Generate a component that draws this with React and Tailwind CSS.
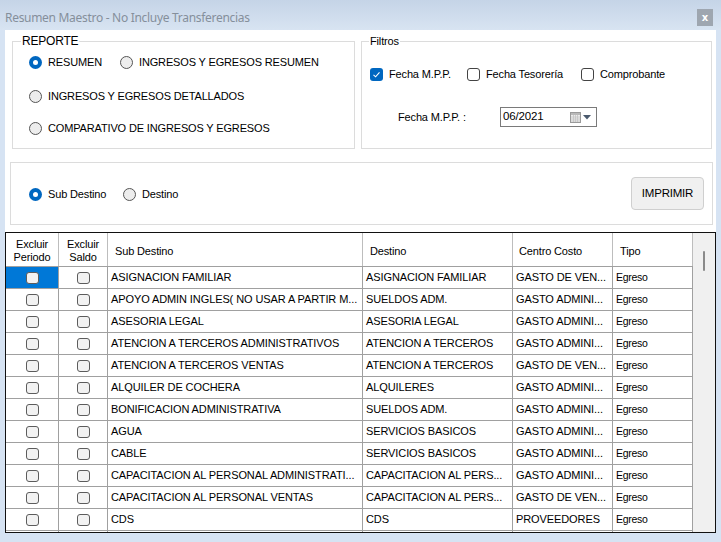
import React from "react";

const rows = [
  ["ASIGNACION FAMILIAR", "ASIGNACION FAMILIAR", "GASTO DE VEN..."],
  ["APOYO ADMIN INGLES( NO USAR A PARTIR M...", "SUELDOS ADM.", "GASTO ADMINI..."],
  ["ASESORIA LEGAL", "ASESORIA LEGAL", "GASTO ADMINI..."],
  ["ATENCION A TERCEROS ADMINISTRATIVOS", "ATENCION A TERCEROS", "GASTO ADMINI..."],
  ["ATENCION A TERCEROS VENTAS", "ATENCION A TERCEROS", "GASTO DE VEN..."],
  ["ALQUILER DE COCHERA", "ALQUILERES", "GASTO ADMINI..."],
  ["BONIFICACION ADMINISTRATIVA", "SUELDOS ADM.", "GASTO ADMINI..."],
  ["AGUA", "SERVICIOS BASICOS", "GASTO ADMINI..."],
  ["CABLE", "SERVICIOS BASICOS", "GASTO ADMINI..."],
  ["CAPACITACION AL PERSONAL ADMINISTRATI...", "CAPACITACION AL PERS...", "GASTO ADMINI..."],
  ["CAPACITACION AL PERSONAL VENTAS", "CAPACITACION AL PERS...", "GASTO DE VEN..."],
  ["CDS", "CDS", "PROVEEDORES"],
  ["", "", ""],
];

function Radio({ checked }) {
  return checked ? (
    <span className="w-[13px] h-[13px] rounded-full bg-[#0067c0] flex items-center justify-center shrink-0">
      <span className="w-[5px] h-[5px] rounded-full bg-white" />
    </span>
  ) : (
    <span className="w-[13px] h-[13px] rounded-full border border-[#555] bg-[#ededed] shrink-0" />
  );
}

function Check({ checked }) {
  return checked ? (
    <span className="w-[13px] h-[13px] rounded-[3px] bg-[#0067c0] flex items-center justify-center shrink-0">
      <svg width="9" height="9" viewBox="0 0 9 9">
        <path d="M1.5 4.8 L3.6 6.8 L7.5 2.4" fill="none" stroke="white" strokeWidth="1.1" />
      </svg>
    </span>
  ) : (
    <span className="w-[13px] h-[13px] rounded-[3px] border border-[#444] bg-white shrink-0" />
  );
}

function GridCheck() {
  return <span className="w-[13px] h-[12px] rounded-[3px] border border-[#5c5c5c] bg-[#f2f2f2] block" />;
}

export default function App() {
  return (
    <div className="w-[721px] h-[542px] bg-[#d6e3f3] flex flex-col overflow-hidden font-['Liberation_Sans',Arial,sans-serif] text-[11px] text-black tracking-[-0.15px]">
      {/* Title bar */}
      <div className="h-[30px] shrink-0 flex items-center justify-between pl-[5px] pr-[8px] bg-gradient-to-b from-[#c5d4e7] to-[#d8e4f2]">
        <span className="font-['Noto_Sans',sans-serif] text-[12px] tracking-[-0.3px] text-[#858f9b] pt-[5px]">
          Resumen Maestro - No Incluye Transferencias
        </span>
        <span className="w-[16px] h-[17px] mt-[5px] bg-[#9ea6b0] flex items-center justify-center text-white font-bold text-[10px] leading-none font-['DejaVu_Sans',sans-serif]">
          x
        </span>
      </div>

      {/* White content */}
      <div className="mx-[5px] bg-white h-[503px] shrink-0 flex flex-col">
        <div className="flex gap-[6px] pl-[7px] pt-[4px]">
          {/* REPORTE */}
          <fieldset className="w-[343px] h-[115px] border border-[#dcdcdc]">
            <legend className="ml-[8px] px-[1px] text-[12px] leading-[14px] tracking-[-0.2px]">REPORTE</legend>
            <div className="flex flex-col pl-[16px]">
              <div className="h-[20px] mt-[4px] flex items-center">
                <div className="w-[91px] flex items-center gap-[6px]">
                  <Radio checked />
                  <span>RESUMEN</span>
                </div>
                <div className="flex items-center gap-[6px]">
                  <Radio />
                  <span>INGRESOS Y EGRESOS RESUMEN</span>
                </div>
              </div>
              <div className="h-[20px] mt-[14px] flex items-center gap-[6px]">
                <Radio />
                <span>INGRESOS Y EGRESOS DETALLADOS</span>
              </div>
              <div className="h-[20px] mt-[12px] flex items-center gap-[6px]">
                <Radio />
                <span>COMPARATIVO DE INGRESOS Y EGRESOS</span>
              </div>
            </div>
          </fieldset>

          {/* Filtros */}
          <fieldset className="w-[351px] h-[115px] border border-[#dcdcdc]">
            <legend className="ml-[7px] px-[1px] text-[11px] leading-[14px]">Filtros</legend>
            <div className="flex flex-col pl-[8px]">
              <div className="h-[20px] mt-[16px] flex items-center">
                <div className="w-[97px] flex items-center gap-[6px]">
                  <Check checked />
                  <span>Fecha M.P.P.</span>
                </div>
                <div className="w-[114px] flex items-center gap-[6px]">
                  <Check />
                  <span>Fecha Tesorería</span>
                </div>
                <div className="flex items-center gap-[6px]">
                  <Check />
                  <span>Comprobante</span>
                </div>
              </div>
              <div className="mt-[23px] flex items-center pl-[28px]">
                <span className="w-[102px]">Fecha M.P.P. :</span>
                <div className="w-[97px] h-[20px] border border-[#7a7a7a] flex items-center pl-[2px] pr-[5px] justify-between">
                  <span className="text-[11.5px]">06/2021</span>
                  <span className="flex items-center gap-[2px]">
                    <svg width="11" height="11" viewBox="0 0 11 11">
                      <rect x="0.5" y="0.5" width="10" height="10" fill="#ececec" stroke="#9a9a9a" />
                      <rect x="1" y="1" width="9" height="2" fill="#b9b9b9" />
                      <path d="M3.5 3 V10 M5.5 3 V10 M7.5 3 V10 M1 5 H10 M1 7 H10 M1 9 H10" stroke="#c4c4c4" strokeWidth="0.8" />
                    </svg>
                    <svg width="8" height="5" viewBox="0 0 8 5">
                      <path d="M0 0 H8 L4 4.5 Z" fill="#4b5a6e" />
                    </svg>
                  </span>
                </div>
              </div>
            </div>
          </fieldset>
        </div>

        {/* Group 2 */}
        <div className="pl-[5px] mt-[13px]">
          <fieldset className="w-[703px] h-[63px] border border-[#dcdcdc] flex items-center justify-between pl-[18px] pr-[8px]">
            <div className="flex items-center pt-[2px]">
              <div className="w-[94px] flex items-center gap-[6px]">
                <Radio checked />
                <span>Sub Destino</span>
              </div>
              <div className="flex items-center gap-[6px]">
                <Radio />
                <span>Destino</span>
              </div>
            </div>
            <button className="w-[73px] h-[33px] bg-[#f0f0f0] border border-[#cfcfcf] rounded-[4px] text-[11.5px] tracking-[-0.2px]">
              IMPRIMIR
            </button>
          </fieldset>
        </div>

        {/* Grid */}
        <div className="mt-[7px] w-[711px] h-[302px] border border-[#111] flex overflow-hidden bg-white">
          <div className="w-[687px] flex flex-col shrink-0">
            <div className="h-[34px] shrink-0 flex border-b border-[#a0a0a0]">
              <div className="w-[53px] border-r border-[#bdbdbd] flex items-center justify-center text-center leading-[13px] pt-[3px]">
                Excluir<br />Periodo
              </div>
              <div className="w-[49px] border-r border-[#bdbdbd] flex items-center justify-center text-center leading-[13px] pt-[3px]">
                Excluir<br />Saldo
              </div>
              <div className="w-[255px] border-r border-[#bdbdbd] flex items-center pl-[7px] pt-[3px]">Sub Destino</div>
              <div className="w-[150px] border-r border-[#bdbdbd] flex items-center pl-[7px] pt-[3px]">Destino</div>
              <div className="w-[100px] border-r border-[#bdbdbd] flex items-center pl-[6px] pt-[3px]">Centro Costo</div>
              <div className="w-[80px] border-r border-[#bdbdbd] flex items-center pl-[7px] pt-[3px]">Tipo</div>
            </div>
            {rows.map((r, i) => (
              <div key={i} className="h-[22px] shrink-0 flex border-b border-[#a0a0a0]">
                <div className={`w-[53px] border-r border-[#a0a0a0] flex items-center justify-center ${i === 0 ? "bg-[#0078d7]" : ""}`}>
                  <GridCheck />
                </div>
                <div className="w-[49px] border-r border-[#a0a0a0] flex items-center justify-center">
                  <GridCheck />
                </div>
                <div className="w-[255px] border-r border-[#a0a0a0] flex items-center pl-[3px] whitespace-nowrap overflow-hidden tracking-[-0.1px]">{r[0]}</div>
                <div className="w-[150px] border-r border-[#a0a0a0] flex items-center pl-[3px] whitespace-nowrap overflow-hidden tracking-[-0.1px]">{r[1]}</div>
                <div className="w-[100px] border-r border-[#a0a0a0] flex items-center pl-[3px] whitespace-nowrap overflow-hidden tracking-[-0.1px]">{r[2]}</div>
                <div className="w-[80px] border-r border-[#a0a0a0] flex items-center pl-[3px] text-[10.5px] tracking-[-0.3px]">{r[0] ? "Egreso" : ""}</div>
              </div>
            ))}
          </div>
          <div className="flex-1 bg-[#f0f0f0] flex justify-center pt-[18px]">
            <span className="w-[2px] h-[20px] bg-[#8a8a8a] rounded-full" />
          </div>
        </div>
      </div>
    </div>
  );
}
